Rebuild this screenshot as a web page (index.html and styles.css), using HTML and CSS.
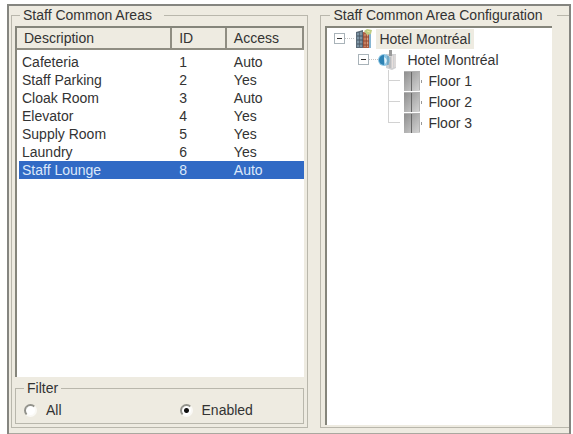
FILE: index.html
```html
<!DOCTYPE html>
<html lang="en">
<head>
<meta charset="utf-8">
<title>Staff Common Areas</title>
<link rel="stylesheet" href="styles.css">
</head>
<body>
<svg class="defs" aria-hidden="true">
  <defs>
    <linearGradient id="steel" x1="0" x2="1" y1="0" y2="1">
      <stop offset="0" stop-color="#8c8c8c"/><stop offset="1" stop-color="#d6d6d6"/>
    </linearGradient>
    <symbol id="floor" viewBox="0 0 20 20">
      <rect x="1" y="0" width="16" height="20" fill="url(#steel)"/>
      <path d="M8.500 0v20" stroke="#686868"/>
      <path d="M16.500 1v18" stroke="#b4b4b4"/>
      <path d="M1 .5h16" stroke="#b0b0b0"/>
      <rect x="18" y="9" width="1" height="3" fill="#999"/>
    </symbol>
  </defs>
</svg>
<main class="window">
  <fieldset class="group areas">
    <legend>Staff Common Areas</legend>
    <div class="list">
      <table>
        <colgroup><col class="c-desc"><col class="c-id"><col class="c-access"></colgroup>
        <thead><tr><th>Description</th><th>ID</th><th>Access</th></tr></thead>
        <tbody>
          <tr><td>Cafeteria</td><td>1</td><td>Auto</td></tr>
          <tr><td>Staff Parking</td><td>2</td><td>Yes</td></tr>
          <tr><td>Cloak Room</td><td>3</td><td>Auto</td></tr>
          <tr><td>Elevator</td><td>4</td><td>Yes</td></tr>
          <tr><td>Supply Room</td><td>5</td><td>Yes</td></tr>
          <tr><td>Laundry</td><td>6</td><td>Yes</td></tr>
          <tr class="selected"><td>Staff Lounge</td><td>8</td><td>Auto</td></tr>
        </tbody>
      </table>
    </div>
    <fieldset class="group filter">
      <legend>Filter</legend>
      <div class="options">
        <label><input type="radio" name="filter" value="all"> All</label>
        <label><input type="radio" name="filter" value="enabled" checked> Enabled</label>
      </div>
    </fieldset>
  </fieldset>
  <fieldset class="group config">
    <legend>Staff Common Area Configuration</legend>
    <div class="tree">
      <ul>
        <li>
          <div class="node">
            <button type="button" class="toggle" aria-label="Collapse" aria-expanded="true"></button><span class="stub"></span>
            <svg class="icon" viewBox="0 0 20 20" aria-hidden="true">
              <path d="M2 3l7-2v18H2z" fill="#5b6b78"/>
              <path d="M9 3l6 1v15H9z" fill="#a95c42"/>
              <path d="M15 5h2v14h-2z" fill="#86b5d2"/>
              <path d="M4 4v14M7 3v15" stroke="#9fbed0"/>
              <path d="M3 7h6M3 11h6M3 15h6" stroke="#495763"/>
              <path d="M11 5v13M13.500 5v13" stroke="#dca27f"/>
              <path d="M9 8h6M9 12h6M9 16h6" stroke="#914832"/>
              <path d="M10 2l3-2 5 1-1 4-4 1z" fill="#bfcd83"/>
              <path d="M13 2l3 1" stroke="#e9e6a0"/>
            </svg>
            <span class="name current">Hotel Montréal</span>
          </div>
          <ul>
            <li>
              <div class="node">
                <button type="button" class="toggle" aria-label="Collapse" aria-expanded="true"></button><span class="stub"></span>
                <svg class="icon" viewBox="0 0 20 20" aria-hidden="true">
                  <path d="M8 4h3V0h3v4h4v14l-4 2-6-2z" fill="#d0d0d2"/>
                  <path d="M11 0h3v6h-3z" fill="#9a9a9a"/>
                  <path d="M12 7v11" stroke="#a9a9ac"/>
                  <path d="M14.500 6v12M17 5v12" stroke="#e8e0dd"/>
                  <circle cx="6" cy="10" r="6" fill="#8cc4e2"/>
                  <path d="M6 5a5 5 0 0 0 0 10z" fill="#2e83b5"/>
                  <path d="M6 7q5 3 1 7z" fill="#e5f5fc"/>
                  <path d="M10 6v9" stroke="#5f8fa9"/>
                </svg>
                <span class="name">Hotel Montréal</span>
              </div>
              <ul class="floors">
                <li><div class="node"><svg class="icon" aria-hidden="true"><use href="#floor"/></svg><span class="name">Floor 1</span></div></li>
                <li><div class="node"><svg class="icon" aria-hidden="true"><use href="#floor"/></svg><span class="name">Floor 2</span></div></li>
                <li><div class="node"><svg class="icon" aria-hidden="true"><use href="#floor"/></svg><span class="name">Floor 3</span></div></li>
              </ul>
            </li>
          </ul>
        </li>
      </ul>
    </div>
  </fieldset>
</main>
</body>
</html>
```
FILE: styles.css
```css
* { box-sizing: border-box; }

body {
  margin: 0;
  background: #fff;
  color: #333;
  font: 14px/18px "Liberation Sans", Arial, sans-serif;
}

.defs { position: absolute; width: 0; height: 0; }

.window {
  display: grid;
  grid-template-columns: 298fr 249fr;
  gap: 12px;
  height: calc(100vh - 4px);
  margin: 4px 2px 0 7px;
  padding: 0 0 6px 2px;
  background: #eeebe1;
  border: 2px solid #858580;
  border-bottom-width: 0;
  box-shadow: inset 0 -1px #aaa89f;
}

.group {
  display: flex;
  flex-direction: column;
  min-width: 0;
  margin: 0;
  padding: 0 3px 3px;
  border: 1px solid #b9b7ac;
}

legend { padding: 0 3px; white-space: nowrap; }

.areas > legend { margin-left: 5px; padding-right: 12px; }

.config {
  padding: 0 17px 2px 4px;
  border-right: 0;
}

.config > legend { margin-left: 5px; padding-right: 14px; }

.list,
.tree {
  flex: 1;
  min-height: 0;
  margin-top: 2px;
  background: #fff;
  border: 2px solid #85857b;
  border-right-width: 0;
  border-bottom-width: 0;
}

table {
  width: 100%;
  border-collapse: separate;
  border-spacing: 0;
  table-layout: fixed;
}

.c-desc { width: 54%; }
.c-id { width: 19%; }

th {
  height: 22px;
  padding: 0 7px;
  text-align: left;
  font-weight: normal;
  background: #eeebe1;
  border-right: 2px solid #8f8d82;
  border-bottom: 2px solid #8f8d82;
}

tbody::before { content: ""; display: block; height: 3px; }

td { height: 18px; padding: 0 7px; }
td:first-child { padding-left: 5px; }

.selected td { background: #316ac5; color: #dce8fa; }
.selected td:first-child {
  background: linear-gradient(to right, #fff 2px, #316ac5 2px);
}

.filter { margin-top: 2px; padding: 4px 8px; }
.filter > legend { margin-left: 0; }

.options {
  display: grid;
  grid-template-columns: 157fr 117fr;
}

.options label {
  display: flex;
  align-items: center;
  gap: 9px;
}

.options input {
  appearance: none;
  width: 13px;
  height: 13px;
  margin: 0;
  border: 2px solid;
  border-color: #92928b #faf9f5 #faf9f5 #92928b;
  border-radius: 50%;
  background: #fff;
}

.options input:checked {
  background: radial-gradient(circle, #111 2px, #fff 3px);
}

.tree ul { margin: 0; padding: 0; list-style: none; }
.tree > ul { padding-left: 7px; }
.tree ul ul { padding-left: 24px; }

.node {
  display: flex;
  align-items: center;
  height: 21px;
}

.toggle {
  width: 11px;
  height: 11px;
  padding: 0 2px;
  border: 1px solid #a9b3b9;
  background: linear-gradient(#333, #333) center / 5px 1px no-repeat #fff;
}

.stub { width: 9px; border-top: 1px dotted #c4c4c4; }

.icon { flex: none; width: 20px; height: 20px; }

.name { padding: 0 3px; white-space: nowrap; line-height: 20px; margin-left: 2px; }
.current { background: #eeebe1; }
.tree ul ul .stub ~ .name { margin-left: 6px; }

.tree ul .floors {
  margin-left: 30px;
  padding-left: 0;
}

.floors li {
  padding-left: 15px;
  background:
    linear-gradient(#d2d2d2, #d2d2d2) 0 0 / 1px 100% no-repeat,
    linear-gradient(#d2d2d2, #d2d2d2) 0 10px / 12px 1px no-repeat;
}

.floors li:last-child {
  background:
    linear-gradient(#d2d2d2, #d2d2d2) 0 0 / 1px 10px no-repeat,
    linear-gradient(#d2d2d2, #d2d2d2) 0 10px / 12px 1px no-repeat;
}
```
